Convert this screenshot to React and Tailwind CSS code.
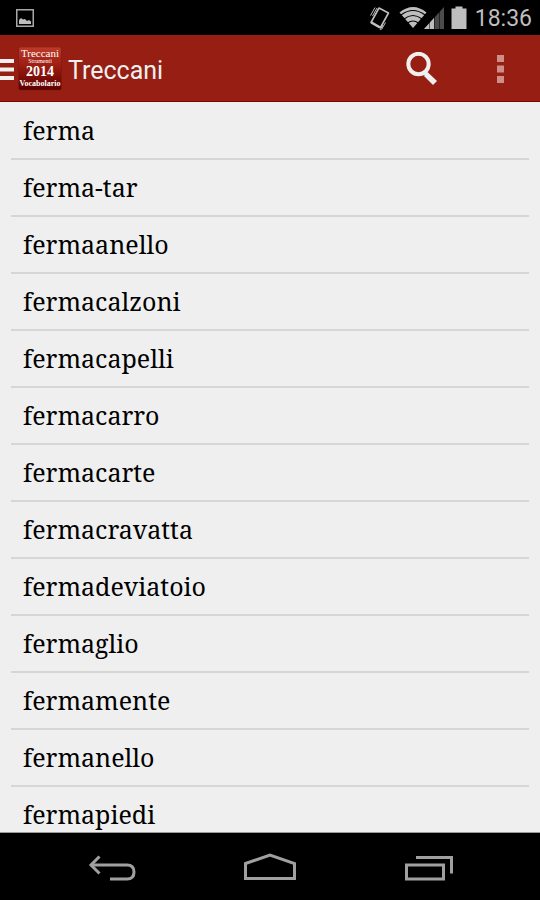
const words = [
  'ferma',
  'ferma-tar',
  'fermaanello',
  'fermacalzoni',
  'fermacapelli',
  'fermacarro',
  'fermacarte',
  'fermacravatta',
  'fermadeviatoio',
  'fermaglio',
  'fermamente',
  'fermanello',
  'fermapiedi'
]

// System status bar
const StatusBar = () => {
  return (
    <div className="flex h-[35px] shrink-0 items-center justify-between bg-black pl-4 pr-2 text-[#bebebe]">
      <svg width="18" height="18" viewBox="0 0 18 18" aria-hidden="true">
        <rect x="0.750" y="0.750" width="16.500" height="16.500" fill="none" stroke="#a8a8a8" strokeWidth="1.5" />
        <path d="M3 15V11L5 9L7 10.500L9 10L11 12L13 11L15 12.500V15Z" fill="currentColor" />
      </svg>

      <div className="flex items-center">
        <svg width="106" height="26" viewBox="0 0 106 26" aria-hidden="true">
          {/* Vibrate */}
          <g fill="none" stroke="currentColor">
            <path d="M10 3L19.500 8L11.500 22.500L2 17.500Z" strokeWidth="1.600" strokeLinejoin="round" />
            <path d="M2.500 17.500L11 22.500" strokeWidth="2.600" />
            <path d="M1.500 10.500L6 2.500M3.500 11L8 3M12.500 24.500L16.500 17.500M11 25L14 20" strokeWidth="1" />
          </g>
          {/* Wifi */}
          <path d="M30.500 7.500Q44 -3.500 57.500 7.500L44 23Z" fill="currentColor" />
          <g fill="none" stroke="#000" strokeWidth="1.100">
            <path d="M32 10Q44 1 56 10" />
            <path d="M35 14Q44 7 53 14" />
            <path d="M38.500 18Q44 14 49.500 18" />
          </g>
          {/* Signal */}
          <path d="M75 2V24H55Z" fill="#4b4b4b" />
          <path d="M65 13V24H55Z" fill="currentColor" />
          <path d="M60.500 15V24M65.500 10V24M70.500 6V24" stroke="#000" strokeWidth="0.500" />
          {/* Battery */}
          <path d="M86.500 1.500H93.500V3.500H97.500V24H82.500V3.500H86.500Z" fill="currentColor" />
        </svg>
        <span className="pt-0.5 font-['Roboto',sans-serif] text-[23px] leading-none">18:36</span>
      </div>
    </div>
  )
}

const AppIcon = () => {
  return (
    <svg width="44" height="44" viewBox="0 0 44 44" className="shrink-0" aria-hidden="true">
      <defs>
        <linearGradient id="appIcon" x1="0" y1="0" x2="0" y2="1">
          <stop offset="0" stopColor="#bf3a28" />
          <stop offset="0.5" stopColor="#96180f" />
          <stop offset="1" stopColor="#5c0000" />
        </linearGradient>
      </defs>
      <rect x="0.500" y="0" width="43" height="43" rx="2" fill="url(#appIcon)" stroke="#7a1a10" strokeWidth="0.600" />
      <g fill="#fff" textAnchor="middle" fontFamily="'Liberation Serif', serif">
        <text x="22" y="10" fontSize="11">Treccani</text>
        <text x="22" y="16" fontSize="6">Strumenti</text>
        <text x="22" y="29" fontSize="14" fontWeight="bold">2014</text>
        <text x="22" y="39" fontSize="8" fontWeight="bold">Vocabolario</text>
      </g>
    </svg>
  )
}

const ActionBar = () => {
  return (
    <header className="flex h-[67px] shrink-0 items-center border-b border-[#850000] bg-[#961e13] pr-6 pt-0.5 text-[#f0f0f0]">
      <button aria-label="Menu" className="flex items-center gap-1">
        <svg width="14" height="24" viewBox="0 0 14 24" aria-hidden="true">
          <path d="M0 4H14M0 12.500H14M0 21H14" stroke="currentColor" strokeWidth="4" />
        </svg>
        <AppIcon />
      </button>
      <h1 className="flex-1 pl-1.5 pt-1 font-['Roboto',sans-serif] text-[25px] leading-8">Treccani</h1>
      <button aria-label="Cerca">
        <svg width="34" height="34" viewBox="0 0 34 34" aria-hidden="true">
          <circle cx="12.500" cy="12" r="10.200" fill="none" stroke="currentColor" strokeWidth="4" />
          <path d="M19.500 18.500L22 20.500L31 29L27 33L18.500 24.500L18 21.500Z" fill="currentColor" />
        </svg>
      </button>
      <button aria-label="Altre opzioni" className="ml-11 flex w-8 justify-center">
        <svg width="8" height="28" viewBox="0 0 8 28" aria-hidden="true">
          <path d="M1 0H8V7H1ZM1 10.500H8V17.500H1ZM1 21H8V28H1Z" fill="#d08e89" />
        </svg>
      </button>
    </header>
  )
}

const WordList = () => {
  return (
    <main className="min-h-0 flex-1 overflow-hidden border-b border-[#9a9a9a] px-[11px] pt-px">
      <ul>
        {words.map((word) => (
          <li key={word} className="border-b-2 border-[#d6d6d2]">
            <a
              href="#"
              className="block px-3 py-2.5 font-['Noto_Serif','Droid_Serif','DejaVu_Serif',serif] text-[25px] leading-[35px] text-black"
            >
              {word}
            </a>
          </li>
        ))}
      </ul>
    </main>
  )
}

// System navigation keys
const NavigationBar = () => {
  return (
    <nav className="flex h-[67px] shrink-0 items-center justify-center gap-[108px] bg-black text-[#a0a0a0]">
      <button aria-label="Indietro">
        <svg width="52" height="30" viewBox="0 0 52 30" fill="none" stroke="currentColor" aria-hidden="true">
          <path d="M7 13H43Q50 13 50 20Q50 27 43 27H26" strokeWidth="3" />
          <path d="M15.500 4.500L7 13L15.500 21.500" strokeWidth="3" />
        </svg>
      </button>
      <button aria-label="Home">
        <svg width="52" height="30" viewBox="0 0 52 30" fill="none" stroke="currentColor" aria-hidden="true">
          <path d="M1.500 11.500L26 3L50.500 11.500V26.500H1.500Z" strokeWidth="3" />
        </svg>
      </button>
      <button aria-label="App recenti">
        <svg width="52" height="30" viewBox="0 0 52 30" fill="none" stroke="currentColor" aria-hidden="true">
          <rect x="2.500" y="13" width="37" height="14" strokeWidth="3" />
          <path d="M12 5.500H47.500V21.500" strokeWidth="3" />
        </svg>
      </button>
    </nav>
  )
}

export default function App() {
  return (
    <div className="flex h-screen flex-col bg-[#efefef]">
      <StatusBar />
      <ActionBar />
      <WordList />
      <NavigationBar />
    </div>
  )
}
